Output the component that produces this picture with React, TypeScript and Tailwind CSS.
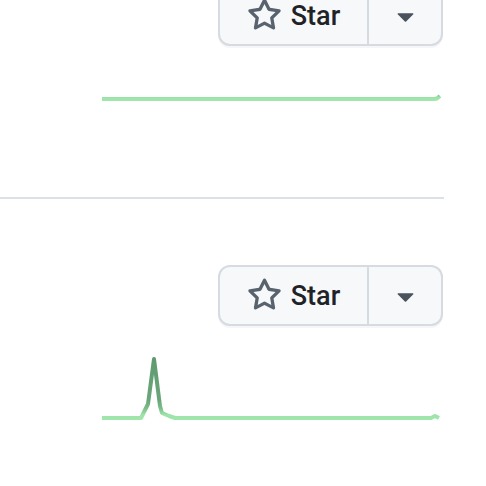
import React from "react";

function StarIcon() {
  return (
    <svg viewBox="0 0 16 16" width="35" height="35" fill="#59636e">
      <path d="M8 .25a.75.75 0 0 1 .673.418l1.882 3.815 4.21.612a.75.75 0 0 1 .416 1.279l-3.046 2.97.719 4.192a.751.751 0 0 1-1.088.791L8 12.347l-3.766 1.98a.75.75 0 0 1-1.088-.79l.72-4.194L.818 6.374a.75.75 0 0 1 .416-1.28l4.21-.611L7.327.668A.75.75 0 0 1 8 .25Zm0 2.445L6.615 5.5a.75.75 0 0 1-.564.41l-3.097.45 2.24 2.184a.75.75 0 0 1 .216.664l-.528 3.084 2.769-1.456a.75.75 0 0 1 .698 0l2.77 1.456-.53-3.084a.75.75 0 0 1 .216-.664l2.24-2.183-3.096-.45a.75.75 0 0 1-.564-.41L8 2.694Z" />
    </svg>
  );
}

function Caret() {
  return (
    <svg viewBox="0 0 16 16" width="35" height="35" fill="#4a525c">
      <path d="m4.427 7.427 3.396 3.396a.25.25 0 0 0 .354 0l3.396-3.396A.25.25 0 0 0 11.396 7H4.604a.25.25 0 0 0-.177.427Z" />
    </svg>
  );
}

function StarButton({ className }: { className?: string }) {
  return (
    <div
      className={
        "flex h-[61px] w-[225px] self-end overflow-hidden rounded-[12px] border-2 border-[#d5dbe0] bg-[#f6f8fa] shadow-[0_2px_0_rgba(31,35,40,0.04)] " +
        (className ?? "")
      }
    >
      <div className="flex w-[149px] items-center justify-center gap-[9px] border-r-2 border-[#d5dbe0]">
        <StarIcon />
        <span className="pt-[2px] font-['Roboto',Arial,sans-serif] text-[27px] font-medium leading-none text-[#1f2328]">
          Star
        </span>
      </div>
      <div className="flex flex-1 items-center justify-center">
        <Caret />
      </div>
    </div>
  );
}

function Sparkline({
  points,
  height,
  id,
  className,
}: {
  points: string;
  height: number;
  id: string;
  className?: string;
}) {
  return (
    <svg
      width="340"
      height={height}
      viewBox={`0 0 340 ${height}`}
      className={"self-end " + (className ?? "")}
    >
      <defs>
        <linearGradient id={id} gradientUnits="userSpaceOnUse" x1="0" y1={height} x2="0" y2="0">
          <stop offset="0%" stopColor="#a0e6ad" />
          <stop offset="8%" stopColor="#9ee4aa" />
          <stop offset="18%" stopColor="#7dbd8b" />
          <stop offset="30%" stopColor="#6aa67a" />
          <stop offset="100%" stopColor="#5f9a6f" />
        </linearGradient>
      </defs>
      <polyline
        points={points}
        fill="none"
        stroke={`url(#${id})`}
        strokeWidth="4"
        strokeLinejoin="round"
        strokeLinecap="butt"
      />
    </svg>
  );
}

export default function App() {
  return (
    <div className="h-[486px] w-[486px] overflow-hidden bg-white">
      <div className="flex w-[444px] flex-col">
        <StarButton className="mt-[-15px] mr-[1px]" />
        <Sparkline
          id="g1"
          height={40}
          className="mr-[3px] mt-[15px]"
          points="1,38 333,38 336,37.5 339,35"
        />
        <div className="mt-[96px] h-[2px] w-full bg-[#dce1e5]" />
        <StarButton className="mt-[66px] mr-[1px]" />
        <Sparkline
          id="g2"
          height={64}
          className="mr-[3px] mt-[30px]"
          points="1,62 40,62 45,52 47,48 53,3 59,50 61,57 68,60 74,62 330,62 334,60 338,62"
        />
      </div>
    </div>
  );
}
